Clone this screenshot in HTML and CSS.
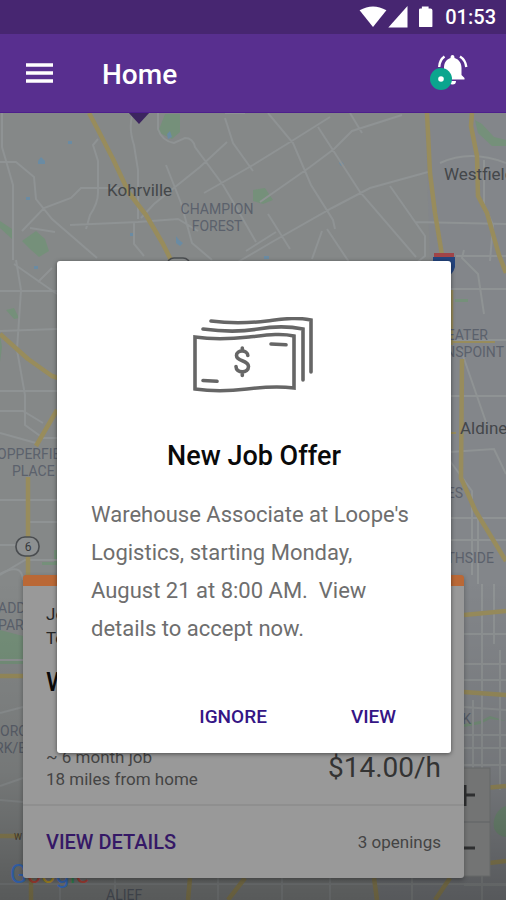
FILE: index.html
```html
<!DOCTYPE html>
<html lang="en">
<head>
<meta charset="utf-8">
<meta name="viewport" content="width=device-width, initial-scale=1">
<title>Home</title>
<link rel="stylesheet" href="styles.css">
</head>
<body>
<div class="status">
  <svg class="status-icons" viewBox="0 0 76 24" aria-hidden="true">
    <path d="M0 4.500Q14-3.500 28 4.500L14 22Z"/>
    <path d="M50 0V22.500H30Z"/>
    <path d="M65 .5h7v2h2q2 0 2 2V21q0 1-1 1H63q-1 0-1-1V4q0-1.500 1.500-1.500H65Z"/>
  </svg>
  <span>01:53</span>
</div>
<header class="appbar">
  <button class="icon-button" type="button" aria-label="Menu">
    <svg class="menu-icon" viewBox="0 0 27 20"><path d="M0 2h27M0 10h27M0 18h27"/></svg>
  </button>
  <h1 class="appbar-title">Home</h1>
  <button class="icon-button" type="button" aria-label="Notifications">
    <svg class="bell-icon" viewBox="0 0 38 36">
      <path class="bell" d="M20.500 3q0-3 2-3t2 3c5 1.500 7 5.500 7 10v7l3 3v1.500H11V23l3-3v-7c0-5 2-8.500 6.500-10ZM19 26h7a3.500 3.500 0 0 1-7 0Z"/>
      <path class="ring" d="M14.500 1.500Q9.500 5 9.200 12M30 1.500q5.500 3.500 6.300 10.500"/>
      <circle class="badge" cx="11" cy="24" r="11"/>
      <circle class="badge-dot" cx="11" cy="24" r="2.800"/>
    </svg>
  </button>
</header>
<main class="stage">
  <svg class="map" viewBox="0 113 506 787" preserveAspectRatio="xMidYMid slice" aria-label="Map">
    <defs>
      <linearGradient id="shade" x1="0" y1="0" x2="0" y2="1">
        <stop offset="0" stop-color="#000" stop-opacity="0"/>
        <stop offset=".6" stop-color="#000" stop-opacity=".12"/>
        <stop offset="1" stop-color="#000" stop-opacity=".34"/>
      </linearGradient>
    </defs>
    <rect class="land" y="113" width="506" height="787"/>
    <path class="city" d="M425 113h81v787H380V730h70V261h-20Z"/>
    <g class="park">
      <path d="M165 114h15v18l-8 7-14-7Z"/>
      <path d="M0 221l12 8v10L0 228Z"/>
      <path d="M22 241l14-10 9 8 4 12-10 6-9-8Z"/>
      <path d="M253 190l12-2 8 12-10 4-10-3Z"/>
      <path d="M475 120l7 4 12 13 12 3v6h-14l-14-13Z"/>
      <path d="M6 310l8-2 5 10-5 1ZM0 335l2 12-2 15Z"/>
      <path d="M455 299h13v3h-13ZM42 562h15v3H42ZM54 550h3v14h-3Z"/>
      <path d="M0 630l23 6v28H0Z"/>
      <path d="M506 806c-8 2-14 12-12 22 2 6 8 9 12 9Z"/>
      <path d="M464 724l16-3 10-5 16 5-16-2-10 5-16 3Z"/>
    </g>
    <g class="water">
      <path d="M38 161l3-4 4 4v3h-7ZM68 141h4v3h-4ZM26 197h4v3h-4ZM167 134l3-3 2 6-4 2ZM130 233h4v3h-4ZM176 236l3 4 4 3-3 3-4-3ZM34 266h4v3h-4ZM339 163l2-2 3 3-3 2ZM264 256h5v3h-5Z"/>
    </g>
    <g class="street">
      <path d="M2 113v34l11 38v75M0 162h16l18 15 2 22 16 20 45 39M22 231l22-23 27-10 10-10h43M98 139l-5 6 5 16v32q0 10-8 22l-4 14M133 113q-5 14 1 32l4 25v49M158 113v16q4 12 16 14l11-5q8 0 10 9l28 38 13 22 20 35M141 218l13-14 46-37 27-25M70 225l68-3 40-3 20 12M30 228l25 4M134 222v22l10 12M166 165l15 38 11 40 20 17M225 118l8 25 20 28M204 193l49-28 42-26 35-22M260 202l50-35 24-18 18-18 50-16M268 113l25 30 18 42 22 35 2 9M318 127l42 65 56 65M238 262l34-20 60-34 38-20 58-16M225 113h20M276 232l-30 19M268 214l22 35M327 229l22 33M322 231l-10 28M350 113l12 20M390 186l35 50v20l-10 8M415 222l91 2M0 291h57M0 331l57-2M16 260l5 30-4 60 8 45v30l18 13h14M0 391h57M0 411h23l20 12M0 433l36 10M0 500h57M30 522h27M0 545h30M14 264l43 30M38 282l14-14M0 575l25-15h32"/>
      <path d="M464 250l-2 8 16 16 6 40M450 289h56M450 340h56M450 396h56M461 350l26 75M450 452l44-3 12 25M450 461l22 30v84M450 518h56M478 518v66M450 540h56M484 160v45l9 20-3 36M456 256h50M440 163q30-14 66 0M464 634h42M464 664h42M464 680h42M482 584v316M494 584v60M464 707l42 3M464 735h42M464 748h42M473 700v70M500 650v140M464 765h42M464 885h42M0 574q22-12 23 6M0 660h23M0 786l23-8M0 713l23-6M0 800l23 2M0 884h506M60 878v22M115 878v22M218 878v22M282 878v22M330 878v22M412 878v22"/>
    </g>
    <g class="road">
      <path d="M89 113l8 15 16 31 16 34 17 22 17 29 11 22"/>
      <path d="M427 113l3 60 5 40 7 42"/>
      <path d="M472 113l-1 13 6 30 1 40 9 17 12 42 7 18"/>
      <path d="M0 334l28 25 24 17 6 2M57 410L36 446M28 477v98"/>
      <path d="M451 290v55M462 359l-1 119 14 32 31 51"/>
      <path d="M464 615l42-4M464 692l42 3M464 790l42-4M464 866l42-5M0 676h23M0 836h20M31 878v22M190 878l-2 22M245 878l-17 22M374 878l3 22M450 878l-15 22"/>
    </g>
    <path class="minor-road" d="M450 342h45M450 433h6"/>
    <g class="shield">
      <rect x="16" y="537" width="23" height="19" rx="9"/>
      <rect x="167" y="258" width="23" height="19" rx="7"/>
      <text x="28" y="551" text-anchor="middle">6</text>
    </g>
    <path class="interstate" d="M433 257h22v10q-2 8-11 12-9-4-11-12Z"/>
    <path class="interstate-top" d="M434 253h20v4h-20Z"/>
    <g class="town">
      <text x="107" y="196">Kohrville</text>
      <text x="444" y="180">Westfield</text>
      <text x="460" y="434">Aldine</text>
    </g>
    <g class="area">
      <text x="217" y="214" text-anchor="middle">CHAMPION</text>
      <text x="217" y="231" text-anchor="middle">FOREST</text>
      <text x="488" y="340" text-anchor="end">GREATER</text>
      <text x="504" y="357" text-anchor="end">GREENSPOINT</text>
      <text x="-12" y="459">COPPERFIELD</text>
      <text x="12" y="476">PLACE</text>
      <text x="463" y="498" text-anchor="end">ES</text>
      <text x="494" y="563" text-anchor="end">NORTHSIDE</text>
      <text x="-2" y="613">ADDI</text>
      <text x="-2" y="630">PARK</text>
      <text x="0" y="736">ORO</text>
      <text x="-5" y="753">RK/E</text>
      <text x="471" y="724" text-anchor="end">K</text>
      <text x="106" y="900">ALIEF</text>
      <text class="tiny" x="14" y="840">W</text>
    </g>
    <rect y="580" width="506" height="320" fill="url(#shade)"/>
    <g class="zoomer">
      <rect x="440" y="768" width="50" height="108"/>
      <path class="zoomer-line" d="M440 822h50"/>
      <path class="zoomer-sign" d="M455 795h20M465 785v21M455 848h20"/>
    </g>
    <text class="google" x="10" y="883"><tspan class="g-blue">G</tspan><tspan class="g-red">o</tspan><tspan class="g-yellow">o</tspan><tspan class="g-blue">g</tspan><tspan class="g-green">l</tspan><tspan class="g-red">e</tspan></text>
    <path class="pointer" d="M128 112h22l-11 12Z"/>
  </svg>

  <article class="card">
    <div class="card-body">
      <p class="card-text dark">Jo</p>
      <p class="card-text dark">To</p>
      <h2 class="card-title">W</h2>
      <div class="card-row">
        <div>
          <p class="card-text">~ 6 month job</p>
          <p class="card-text">18 miles from home</p>
        </div>
        <p class="rate">$14.00/h</p>
      </div>
    </div>
    <footer class="card-footer">
      <a class="details" href="#details">VIEW DETAILS</a>
      <p class="card-text">3 openings</p>
    </footer>
  </article>

  <section class="dialog" role="dialog" aria-labelledby="offer-title">
    <svg class="money" viewBox="0 0 122 76" aria-hidden="true">
      <path d="M18 4C40 7 57 6 74 4S102 0 118 3V55"/>
      <path d="M10 12C32 15 48 15 65 12S95 9 110 12V63"/>
      <path d="M2 20C22 23 38 22 56 20S88 16 101 19V71C86 69 70 70 54 72S22 75 2 72Z"/>
      <path d="M78 27l15 .8M10 63.500l14 .8"/>
      <path class="dollar" d="M54.800 38.500C54.500 32.500 43.500 32.500 43.500 38.500 43.500 45 55.500 42.500 55.500 49.500 55.500 56.500 43 56.500 43 49.500M49.300 31v3M49.300 55v3.500"/>
    </svg>
    <h2 class="dialog-title" id="offer-title">New Job Offer</h2>
    <p class="dialog-text">Warehouse Associate at Loope's Logistics, starting Monday, August 21 at 8:00 AM.&nbsp; View details to accept now.</p>
    <div class="actions">
      <button class="action" type="button">IGNORE</button>
      <button class="action" type="button">VIEW</button>
    </div>
  </section>
</main>
</body>
</html>
```
FILE: styles.css
```css
* { box-sizing: border-box; }

body {
  margin: 0;
  min-height: 100vh;
  display: flex;
  flex-direction: column;
  font-family: Roboto, "Liberation Sans", sans-serif;
  background: #858989;
}

h1, h2, p { margin: 0; font-weight: 400; }

button {
  padding: 0;
  border: 0;
  background: none;
  font: inherit;
  cursor: pointer;
}

.status {
  display: flex;
  align-items: center;
  justify-content: flex-end;
  gap: 12px;
  height: 34px;
  padding-right: 10px;
  background: #472671;
  color: #fff;
  font-size: 20px;
  font-weight: 500;
}

.status-icons { width: 74px; height: 24px; padding-top: 1px; fill: #fff; }

.appbar {
  display: flex;
  align-items: center;
  height: 79px;
  padding: 0 38px 0 26px;
  background: #582f8f;
  border-bottom: 1px solid #4d1f8c;
  color: #fff;
}

.icon-button { display: flex; }
.menu-icon { width: 27px; height: 20px; stroke: #fff; stroke-width: 3.4; }

.appbar-title {
  flex: 1;
  padding: 4px 0 0 49px;
  font-size: 28px;
  font-weight: 500;
  line-height: 32px;
}

.bell-icon { width: 38px; height: 36px; }
.bell { fill: #fff; }
.ring { fill: none; stroke: #fff; stroke-width: 2.4; }
.badge { fill: #0ba58e; }
.badge-dot { fill: #fff; }

.stage {
  flex: 1;
  display: grid;
  position: relative;
  overflow: hidden;
}

.card, .dialog { grid-area: 1 / 1; position: relative; }

.map { position: absolute; inset: 0; width: 100%; height: 100%; }
.land { fill: #858888; }
.city { fill: #82868c; opacity: .6; }
.park { fill: #75907a; }
.water { fill: #6a8ba3; }
.street { fill: none; stroke: #8f9394; stroke-width: 2; }
.road { fill: none; stroke: #988c5c; stroke-width: 4.5; stroke-linejoin: round; }
.minor-road { fill: none; stroke: #988c5c; stroke-width: 2; }
.shield { fill: #8d9091; stroke: #4a4d50; stroke-width: 1.6; }
.shield text { fill: #36393c; stroke: none; font-size: 12px; }
.interstate { fill: #24457f; }
.interstate-top { fill: #a04448; }
.town { fill: #44474a; font-size: 17px; }
.area { fill: #5b616c; font-size: 14px; }
.area .tiny { fill: #4f4638; font-size: 9px; }
.zoomer rect { fill: #737474; stroke: #666869; }
.zoomer-line { stroke: #616364; }
.zoomer-sign { stroke: #2e2f30; stroke-width: 3; }
.google { font-size: 25px; }
.g-blue { fill: #2f5b9f; }
.g-red { fill: #91382f; }
.g-yellow { fill: #957a22; }
.g-green { fill: #2c7546; }
.pointer { fill: #3c2560; }

.card {
  align-self: end;
  margin: 0 42px 22px 23px;
  border-top: 11px solid #ba6836;
  border-radius: 3px;
  background: #999;
  box-shadow: 0 2px 5px rgba(0, 0, 0, .3);
}

.card-body {
  padding: 16px 23px 14px;
  border-bottom: 2px solid #8f8f8f;
}

.card-text { color: #444; font-size: 17px; line-height: 22px; }
.dark { color: #262626; line-height: 24px; }

.card-title {
  padding: 16px 0 48px;
  color: #0a0a0a;
  font-size: 26px;
  font-weight: 500;
  line-height: 32px;
}

.card-row {
  display: flex;
  align-items: center;
  justify-content: space-between;
}

.rate { color: #333; font-size: 28px; line-height: 32px; }

.card-footer {
  display: flex;
  align-items: center;
  justify-content: space-between;
  height: 72px;
  padding: 0 23px;
}

.details {
  color: #351866;
  font-size: 20px;
  font-weight: 500;
  text-decoration: none;
}

.dialog {
  align-self: center;
  display: flex;
  flex-direction: column;
  margin: 0 55px 0 57px;
  padding: 56px 34px 24px;
  border-radius: 3px;
  background: #fff;
  box-shadow: 0 1px 4px rgba(0, 0, 0, .5);
}

.money {
  align-self: center;
  width: 122px;
  height: 76px;
  fill: none;
  stroke: #666;
  stroke-width: 3.6;
  stroke-linecap: round;
}

.dialog-title {
  margin-top: 47px;
  color: #0a0a0a;
  font-size: 27px;
  font-weight: 500;
  line-height: 32px;
  text-align: center;
}

.dialog-text {
  margin-top: 24px;
  color: #6e6e6e;
  font-size: 22px;
  line-height: 38px;
}

.actions {
  display: flex;
  justify-content: flex-end;
  gap: 84px;
  margin-top: 57px;
  padding-right: 21px;
}

.action {
  color: #351585;
  font-size: 19px;
  font-weight: 500;
  line-height: 24px;
}
```
